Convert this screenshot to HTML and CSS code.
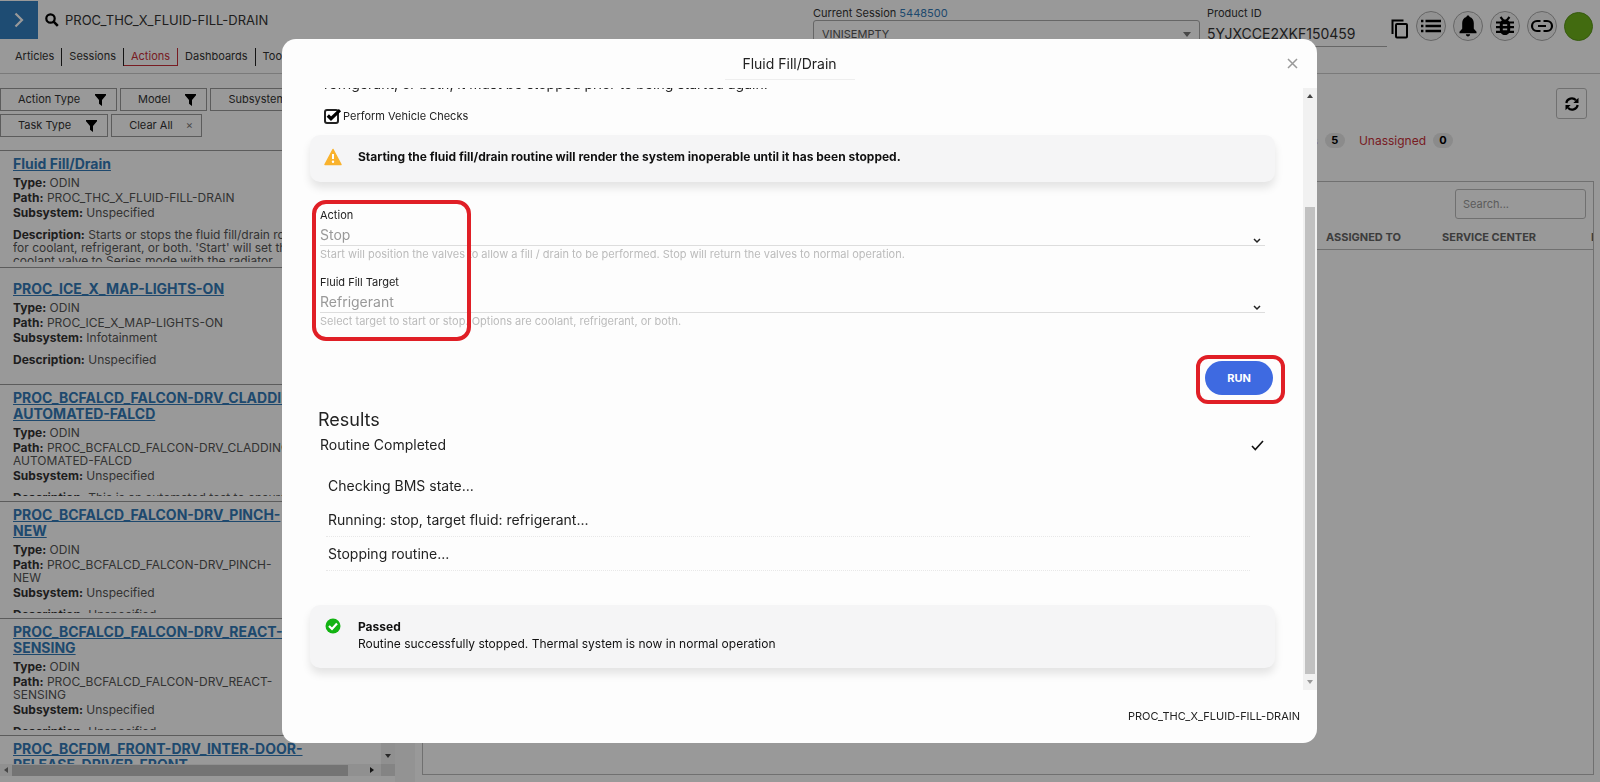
FILE: index.html
```
<!DOCTYPE html>
<html lang="en">
<head>
<meta charset="utf-8">
<title>Fluid Fill/Drain</title>
<link rel="stylesheet" href="styles.css">
</head>
<body>

<div id="page">
	<header id="header">
		<div class="head-left">
			<div class="search-row">
				<button class="expand" aria-label="Expand"><svg width="10" height="16" viewBox="0 0 10 16"><path d="M1.5 1.5L8 8l-6.500 6.500" fill="none" stroke="#fff" stroke-width="2.200"/></svg></button>
				<label for="q" class="search-icon"><svg width="14" height="14" viewBox="0 0 14 14"><circle cx="5.500" cy="5.500" r="4.200" fill="none" stroke="#000" stroke-width="2.200"/><path d="M8.600 8.600L12.800 12.800" stroke="#000" stroke-width="2.600"/></svg></label>
				<input id="q" class="search-text" type="text" value="PROC_THC_X_FLUID-FILL-DRAIN">
			</div>
			<nav class="tabs">
				<a href="#">Articles</a>
				<a href="#">Sessions</a>
				<a href="#" class="active">Actions</a>
				<a href="#">Dashboards</a>
				<a href="#">Tools</a>
			</nav>
		</div>
		<div class="session">
			<label for="session">Current Session <a href="#">5448500</a></label>
			<div class="select-wrap">
				<select id="session"><option>VINISEMPTY</option></select>
				<i class="caret"></i>
			</div>
		</div>
		<div class="product">
			<label for="pid">Product ID</label>
			<input id="pid" type="text" value="5YJXCCE2XKF150459">
		</div>
		<div class="tools">
			<button class="copy" aria-label="Copy"><svg width="18" height="20" viewBox="0 0 18 20"><path d="M1.500 15V1.500H12.500" fill="none" stroke="#000" stroke-width="2"/><rect x="5" y="5" width="11" height="13.500" rx="1" fill="none" stroke="#000" stroke-width="2"/></svg></button>
			<button class="round" aria-label="List"><svg width="22" height="16" viewBox="0 0 22 16"><path d="M5.500 3H21M5.500 8H21M5.500 13H21" stroke="#000" stroke-width="2.400"/><path d="M1 3H3.400M1 8H3.400M1 13H3.400" stroke="#000" stroke-width="2.400"/></svg></button>
			<button class="round" aria-label="Alerts"><svg width="20" height="22" viewBox="0 0 20 22"><path d="M10 0.500c1 0 1.600.7 1.600 1.600 2.700.8 4.200 3 4.200 6v5.600l2.700 3v1.500H1.500v-1.500l2.700-3V8.100c0-3 1.500-5.200 4.200-6C8.400 1.200 9 .5 10 .5zM7.900 19.300h4.200c0 1.300-.9 2.200-2.100 2.200s-2.100-.9-2.100-2.200z"/></svg></button>
			<button class="round" aria-label="Bugs"><svg width="20" height="20" viewBox="0 0 20 20"><path d="M10 3.600c3.200 0 5.200 2.200 5.200 5.200v4.600c0 3-2.200 5.600-5.200 5.600s-5.200-2.600-5.200-5.600V8.800c0-3 2-5.200 5.200-5.200z"/><path d="M5.500 1L8.300 4.400M14.500 1l-2.800 3.400M1 6.500h18M1 11.200h18M1 15.800h18" stroke="#000" stroke-width="2.200" fill="none"/><path d="M7.800 9.200h4.400M7.800 13.400h4.400" stroke="#eee" stroke-width="1.800"/></svg></button>
			<button class="round" aria-label="Link"><svg width="24" height="14" viewBox="0 0 24 14"><path d="M10.500 2H7a5 5 0 0 0 0 10h3.500M13.500 2H17a5 5 0 0 1 0 10h-3.500M8 7h8" fill="none" stroke="#000" stroke-width="2.200"/></svg></button>
			<span class="avatar"></span>
		</div>
	</header>

	<div id="main">
		<aside id="side">
			<div class="filters">
				<button>Action Type <svg width="11" height="12" viewBox="0 0 11 12"><path d="M0 0h11v1.300L7 6v6L4 9.800V6L0 1.300z"/></svg></button>
				<button>Model <svg width="11" height="12" viewBox="0 0 11 12"><path d="M0 0h11v1.300L7 6v6L4 9.800V6L0 1.300z"/></svg></button>
				<button>Subsystem <svg width="11" height="12" viewBox="0 0 11 12"><path d="M0 0h11v1.300L7 6v6L4 9.800V6L0 1.300z"/></svg></button>
				<button>Task Type <svg width="11" height="12" viewBox="0 0 11 12"><path d="M0 0h11v1.300L7 6v6L4 9.800V6L0 1.300z"/></svg></button>
				<button class="clear">Clear All <span>×</span></button>
			</div>
			<div class="list-wrap">
				<div class="list">
					<div class="item">
						<a href="#">Fluid Fill/Drain</a>
						<p><b>Type:</b> ODIN</p>
						<p><b>Path:</b> PROC_THC_X_FLUID-FILL-DRAIN</p>
						<p><b>Subsystem:</b> Unspecified</p>
						<p class="desc"><b>Description:</b> Starts or stops the fluid fill/drain routine<br>for coolant, refrigerant, or both. 'Start' will set the<br>coolant valve to Series mode with the radiator</p>
					</div>
					<div class="item">
						<a href="#">PROC_ICE_X_MAP-LIGHTS-ON</a>
						<p><b>Type:</b> ODIN</p>
						<p><b>Path:</b> PROC_ICE_X_MAP-LIGHTS-ON</p>
						<p><b>Subsystem:</b> Infotainment</p>
						<p class="desc"><b>Description:</b> Unspecified</p>
					</div>
					<div class="item">
						<a href="#">PROC_BCFALCD_FALCON-DRV_CLADDING-<br>AUTOMATED-FALCD</a>
						<p><b>Type:</b> ODIN</p>
						<p><b>Path:</b> PROC_BCFALCD_FALCON-DRV_CLADDING-<br>AUTOMATED-FALCD</p>
						<p><b>Subsystem:</b> Unspecified</p>
						<p class="desc"><b>Description:</b> This is an automated test to ensure</p>
					</div>
					<div class="item">
						<a href="#">PROC_BCFALCD_FALCON-DRV_PINCH-<br>NEW</a>
						<p><b>Type:</b> ODIN</p>
						<p><b>Path:</b> PROC_BCFALCD_FALCON-DRV_PINCH-<br>NEW</p>
						<p><b>Subsystem:</b> Unspecified</p>
						<p class="desc"><b>Description:</b> Unspecified</p>
					</div>
					<div class="item">
						<a href="#">PROC_BCFALCD_FALCON-DRV_REACT-<br>SENSING</a>
						<p><b>Type:</b> ODIN</p>
						<p><b>Path:</b> PROC_BCFALCD_FALCON-DRV_REACT-<br>SENSING</p>
						<p><b>Subsystem:</b> Unspecified</p>
						<p class="desc"><b>Description:</b> Unspecified</p>
					</div>
					<div class="item">
						<a href="#">PROC_BCFDM_FRONT-DRV_INTER-DOOR-<br>RELEASE-DRIVER-FRONT</a>
						<p><b>Type:</b> ODIN</p>
						<p><b>Path:</b> PROC_BCFDM_FRONT-DRV_INTER-DOOR-<br>RELEASE-DRIVER-FRONT</p>
						<p><b>Subsystem:</b> Unspecified</p>
						<p class="desc"><b>Description:</b> Unspecified</p>
					</div>
				</div>
				<div class="vbar"><i class="tri down"></i></div>
			</div>
			<div class="hbar">
				<i class="tri left"></i><span class="hthumb"></span><i class="tri right"></i>
				<span class="corner"></span>
			</div>
		</aside>
		<div class="gutter"></div>
		<section id="content">
			<div class="top"><button class="refresh" aria-label="Refresh"><svg width="14" height="14" viewBox="0 0 14 14"><path d="M1.300 6A5.600 5.600 0 0 1 11 3.300M12.700 8A5.600 5.600 0 0 1 3 10.700" fill="none" stroke="#000" stroke-width="2.200"/><path d="M13.500 0.800V6H8.300zM0.500 13.200V8H5.700z"/></svg></button></div>
			<div class="counts">
				<a href="#">s</a><span class="badge">5</span>
				<a href="#">Unassigned</a><span class="badge">0</span>
			</div>
			<div class="panel">
				<div class="find"><input type="text" placeholder="Search..." aria-label="Search"></div>
				<table>
					<colgroup><col><col class="c-assigned"><col class="c-center"><col class="c-last"></colgroup>
					<tr><th></th><th>ASSIGNED TO</th><th>SERVICE CENTER</th><th>I</th></tr>
				</table>
			</div>
		</section>
	</div>
</div>

<div id="overlay">
	<div id="modal" role="dialog" aria-labelledby="mtitle">
		<div class="modal-head">
			<h1 id="mtitle">Fluid Fill/Drain</h1>
			<button class="close" aria-label="Close"><svg width="11" height="11" viewBox="0 0 11 11"><path d="M1 1l9 9M10 1l-9 9" stroke="#999" stroke-width="1.500"/></svg></button>
		</div>
		<div class="modal-body">
			<div class="scroll">
				<p class="intro">refrigerant, or both, it must be stopped prior to being started again.</p>
				<div class="check">
					<span class="box">
						<input type="checkbox" id="checks" checked>
						<svg width="18" height="16" viewBox="0 0 18 16"><path d="M3.800 7.500L7 10.700L16 2.200" fill="none" stroke="#000" stroke-width="3.200"/></svg>
					</span>
					<label for="checks">Perform Vehicle Checks</label>
				</div>
				<div class="alert">
					<svg width="18" height="18" viewBox="0 0 18 18"><path d="M9 1.500L17 16.500H1z" fill="#f9b22d" stroke="#f9b22d" stroke-width="1.500" stroke-linejoin="round"/><path d="M9 6v5" stroke="#fff" stroke-width="2"/><circle cx="9" cy="13.700" r="1.200" fill="#fff"/></svg>
					<div><b>Starting the fluid fill/drain routine will render the system inoperable until it has been stopped.</b></div>
				</div>
				<div class="fields">
					<div class="field">
						<label for="action">Action</label>
						<div class="value">
							<select id="action" disabled><option>Stop</option></select>
							<svg width="8" height="6" viewBox="0 0 8 6"><path d="M1 1l3 3 3-3" fill="none" stroke="#222" stroke-width="1.500"/></svg>
						</div>
						<small>Start will position the valves to allow a fill / drain to be performed. Stop will return the valves to normal operation.</small>
					</div>
					<div class="field">
						<label for="target">Fluid Fill Target</label>
						<div class="value">
							<select id="target" disabled><option>Refrigerant</option></select>
							<svg width="8" height="6" viewBox="0 0 8 6"><path d="M1 1l3 3 3-3" fill="none" stroke="#222" stroke-width="1.500"/></svg>
						</div>
						<small>Select target to start or stop. Options are coolant, refrigerant, or both.</small>
					</div>
					<span class="mark mark-fields"></span>
				</div>
				<div class="actions">
					<div class="run-wrap">
						<button class="run">RUN</button>
						<span class="mark mark-run"></span>
					</div>
				</div>
				<h2>Results</h2>
				<div class="status">Routine Completed
					<svg width="13" height="11" viewBox="0 0 13 11"><path d="M1 6l3.300 3.500L12 1" fill="none" stroke="#111" stroke-width="1.600"/></svg>
				</div>
				<ul class="log">
					<li>Checking BMS state...</li>
					<li>Running: stop, target fluid: refrigerant...</li>
					<li>Stopping routine...</li>
				</ul>
				<div class="alert passed">
					<svg width="16" height="16" viewBox="0 0 16 16"><circle cx="8" cy="8" r="7.500" fill="#12b312"/><path d="M4 8l3 3 5-5.500" fill="none" stroke="#fff" stroke-width="2.200"/></svg>
					<div><b>Passed</b><br>Routine successfully stopped. Thermal system is now in normal operation</div>
				</div>
			</div>
			<div class="bar"><i class="tri up"></i><span class="thumb"></span><i class="tri down"></i></div>
		</div>
		<div class="modal-foot">PROC_THC_X_FLUID-FILL-DRAIN</div>
	</div>
</div>

</body>
</html>
```
FILE: styles.css
```
*{margin:0;padding:0;box-sizing:border-box;}
body{font:12px/15px Inter, "Liberation Sans", sans-serif;color:#333;background:#fff;overflow:hidden;}
button,input,select{font:inherit;color:inherit;background:none;border:0;outline:0;}
select{appearance:none;opacity:1;}
svg{display:block;flex:none;}
a{color:#337ab7;text-decoration:none;}
ul{list-style:none;}
#page{height:100vh;display:flex;flex-direction:column;}

/* header */
#header{flex:none;height:74px;display:flex;border-bottom:1px solid #ccc;}
.head-left{flex:1;min-width:0;}
.search-row{display:flex;align-items:center;height:40px;}
.expand{width:38px;height:38px;background:#337fc0;display:flex;align-items:center;justify-content:center;}
.search-icon{margin:0 6px 0 7px;}
.search-text{width:300px;font-size:13px;}
.tabs{display:flex;height:18px;margin-top:8px;padding-left:8px;font-size:11px;}
.tabs a{color:#333;padding:0 7px;line-height:17px;border-right:1px solid #222;}
.tabs a.active{color:#c8303a;border:solid #c8303a;border-width:0 1px 1px 0;}
.tabs a:last-child{border:0;}
.session{width:387px;margin-right:7px;padding-top:6px;font-size:11px;}
.session label,.product label{display:block;height:14px;}
.select-wrap{display:flex;align-items:center;height:28px;border:1px solid #aaa;border-radius:3px;padding:0 8px;}
.select-wrap select{flex:1;color:#555;}
.caret{border:solid transparent;border-width:5px 4px 0;border-top-color:#777;}
.product{width:180px;padding-top:6px;font-size:11px;}
.product input{width:100%;height:27px;font-size:14px;line-height:20px;border-bottom:1px solid #aaa;}
.tools{display:flex;align-items:center;height:52px;padding:0 7px 0 4px;gap:7px;}
.copy{padding-top:6px;}
.round{width:30px;height:30px;border:1px solid #aaa;border-radius:50%;background:#f4f4f4;display:flex;align-items:center;justify-content:center;}
.avatar{width:29px;height:29px;border-radius:50%;background:#6eb31c;border:1px solid #5a9618;}

/* left list */
#main{flex:1;min-height:0;display:flex;}
#side{width:395px;flex:none;display:flex;flex-direction:column;padding:14px 0 6px;}
.filters{display:flex;flex-wrap:wrap;align-content:flex-start;gap:3px;height:62px;font-size:11px;}
.filters button{height:23px;padding:0 10px 0 17px;border:1px solid #999;display:flex;align-items:center;gap:15px;}
.filters .clear{gap:13px;padding-right:8px;}
.filters .clear span{color:#777;}
.list-wrap{flex:1;min-height:0;display:flex;border-top:1px solid #999;}
.list{flex:1;overflow:hidden;}
.item{height:117px;padding:5px 0 5px 13px;border-bottom:1px solid #999;display:flex;flex-direction:column;justify-content:safe center;overflow:clip;overflow-clip-margin:content-box;white-space:nowrap;}
.item a{font-size:14px;line-height:16px;font-weight:700;text-decoration:underline;margin-bottom:2px;}
.item p{line-height:13px;margin-top:2px;color:#555;}
.item b{color:#333;}
.item .desc{margin:9px 0 6px;}
.vbar{width:14px;background:#f1f1f1;display:flex;flex-direction:column;align-items:center;justify-content:flex-end;padding-bottom:6px;}
.hbar{height:12px;background:#f1f1f1;display:flex;align-items:center;gap:4px;padding-left:4px;}
.hthumb{width:336px;height:11px;background:#c1c1c1;}
.hbar .right{margin-left:18px;}
.corner{width:14px;height:12px;background:#dcdcdc;margin-left:auto;}
.tri{width:0;height:0;border:3px solid transparent;flex:none;}
.tri.up{border-width:0 3px 4px;border-bottom-color:#444;}
.tri.down{border-width:4px 3px 0;border-top-color:#444;}
.tri.left{border-width:3px 4px 3px 0;border-right-color:#777;}
.tri.right{border-width:3px 0 3px 4px;border-left-color:#222;}
.gutter{width:20px;flex:none;background:#f6f6f6;}

/* right panel */
#content{flex:1;min-width:0;padding:14px 6px 7px 7px;display:flex;flex-direction:column;}
.top{display:flex;justify-content:flex-end;padding-right:7px;}
.refresh{width:31px;height:31px;border:1px solid #bbb;border-radius:3px;display:flex;align-items:center;justify-content:center;}
.counts{display:flex;align-items:center;justify-content:flex-end;height:42px;padding-right:141px;}
.counts a{color:#c8303a;}
.badge{width:20px;line-height:15px;border-radius:8px;background:#e8e8e8;color:#000;font-weight:700;font-size:11px;text-align:center;margin:0 14px 0 7px;}
.badge:last-child{margin-right:0;}
.panel{flex:1;margin-top:20px;border:1px solid #bbb;overflow:hidden;}
.find{display:flex;justify-content:flex-end;padding:7px 7px 0;}
.find input{width:131px;height:30px;border:1px solid #bbb;border-radius:3px;padding:0 7px;font-size:11px;}
.find input::placeholder{color:#999;opacity:1;}
table{width:100%;table-layout:fixed;border-collapse:collapse;margin-top:8px;}
th{height:22px;text-align:left;font-size:11px;color:#666;border-bottom:1px solid #bbb;white-space:nowrap;overflow:hidden;}
.c-assigned{width:116px;}
.c-center{width:149px;}
.c-last{width:2px;}

/* dialog */
#overlay{position:fixed;top:0;right:0;bottom:0;left:0;background:rgba(0,0,0,.4);padding:39px 283px 39px 282px;display:flex;}
#modal{flex:1;min-width:0;background:#fdfdfd;border-radius:14px;display:flex;flex-direction:column;overflow:hidden;color:#222;}
.modal-head{height:49px;flex:none;display:flex;align-items:flex-start;padding:9px 19px 0 10px;}
.modal-head h1{width:130px;margin:0 auto;font-size:14px;font-weight:400;line-height:31px;text-align:center;border-bottom:1px solid #eee;}
.close{height:30px;}
.modal-body{flex:1;min-height:0;display:flex;}
.scroll{flex:1;min-width:0;padding:0 28px;overflow:hidden;}
.intro{font-size:14px;line-height:20px;margin:-14px 0 0 14px;}
.check{display:flex;align-items:center;gap:3px;height:16px;margin:14px 0 11px 14px;}
.check label{font-size:11px;}
.box{position:relative;width:16px;height:15px;}
.box input{display:block;appearance:none;width:15px;height:15px;border:2px solid #222;border-radius:3px;}
.box svg{position:absolute;top:-1px;left:0;pointer-events:none;}
.alert{display:flex;gap:16px;min-height:47px;padding:13px 15px 12px 14px;background:#f5f5f6;border-radius:10px;box-shadow:0 6px 8px rgba(0,0,0,.1);line-height:17px;color:#111;}
.fields{position:relative;margin:25px 10px 0;}
.field{height:67px;}
.field label{display:block;font-size:11px;line-height:17px;}
.value{display:flex;align-items:center;justify-content:space-between;height:22px;padding-right:4px;border-bottom:1px solid #ddd;}
.value select{flex:1;font-size:14px;line-height:20px;height:21px;color:#999;}
.value svg{margin-top:12px;}
.field small{display:block;font-size:11px;line-height:17px;color:#bbb;}
.mark{position:absolute;border:4px solid #e01f26;border-radius:14px;pointer-events:none;}
.mark-fields{top:-7px;left:-8px;width:159px;height:141px;}
.actions{display:flex;justify-content:flex-end;margin:20px 2px 0 0;}
.run-wrap{position:relative;}
.run{display:block;width:68px;height:34px;border-radius:17px;background:#3e6ae1;color:#fff;font-size:11px;font-weight:700;}
.mark-run{top:-6px;right:-12px;width:89px;height:49px;border-radius:12px;}
h2{font-size:18px;font-weight:400;line-height:24px;margin:13px 0 0 8px;}
.status{display:flex;align-items:center;justify-content:space-between;font-size:14px;line-height:26px;margin:0 11px 0 10px;}
.log{margin:11px 25px 0 16px;font-size:14px;}
.log li{height:34px;line-height:34px;padding-left:2px;border-bottom:1px dotted #e8e8e8;}
.log li:first-child{border-color:transparent;}
.passed{margin-top:34px;min-height:63px;}
.passed svg{margin:0 1px;}
.bar{width:14px;flex:none;background:#f1f1f1;display:flex;flex-direction:column;align-items:center;padding:6px 0;}
.thumb{flex:1;width:10px;margin:109px 0 6px;background:#c1c1c1;}
.bar .down{border-top-color:#999;}
.modal-foot{height:53px;flex:none;padding:19px 17px 0 0;font-size:11px;text-align:right;}
```
